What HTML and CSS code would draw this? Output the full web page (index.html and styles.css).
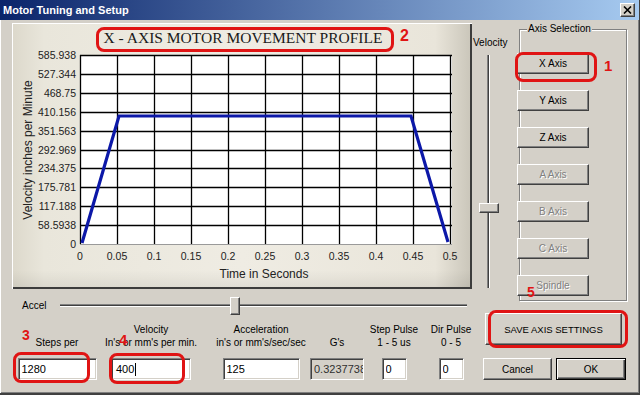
FILE: index.html
```html
<!DOCTYPE html>
<html lang="en">
<head>
    <meta charset="UTF-8">
    <title>Motor Tuning and Setup</title>
    <link rel="stylesheet" href="styles.css">
</head>
<body>

<div class="window">
    <div class="titlebar">
        <span>Motor Tuning and Setup</span>
        <button class="close">
            <svg width="9" height="8" viewBox="0 0 9 8"><path d="M1 0.5L8 7.5M8 0.5L1 7.5" stroke="#000" stroke-width="1.6"/></svg>
        </button>
    </div>

    <div class="main">
        <div class="left">
            <div class="top">
                <div class="chart-panel">
                    <svg width="458" height="264" viewBox="0 0 458 264">
                        <text class="chart-title" x="231" y="20" text-anchor="middle">X - AXIS MOTOR MOVEMENT PROFILE</text>
                        <rect x="68" y="32" width="372" height="190" fill="#fff"/>
                        <path d="M68.5 32V221M105.5 32V221M142.5 32V221M179.5 32V221M216.5 32V221M253.5 32V221M290.5 32V221M327.5 32V221M364.5 32V221M401.5 32V221M438.5 32V221" stroke="#000" stroke-width="1.3"/>
                        <path d="M68 32.5H440M68 51.5H440M68 70.5H440M68 89.5H440M68 108.5H440M68 127.5H440M68 145.5H440M68 164.5H440M68 183.5H440M68 202.5H440" stroke="#000" stroke-width="1.3"/>
                        <path d="M68 221.5H440" stroke="#9a9a9a" stroke-width="1"/>
                        <polyline points="70,220 107,93 399,93 436,219" fill="none" stroke="#0c18a8" stroke-width="3.2"/>
                        <g class="axis-num" text-anchor="end">
                            <text x="64" y="36">585.938</text>
                            <text x="64" y="55">527.344</text>
                            <text x="64" y="74">468.75</text>
                            <text x="64" y="93">410.156</text>
                            <text x="64" y="112">351.563</text>
                            <text x="64" y="131">292.969</text>
                            <text x="64" y="149">234.375</text>
                            <text x="64" y="168">175.781</text>
                            <text x="64" y="187">117.188</text>
                            <text x="64" y="206">58.5938</text>
                            <text x="64" y="225">0</text>
                        </g>
                        <g class="axis-num" text-anchor="middle">
                            <text x="68" y="237">0</text>
                            <text x="105" y="237">0.05</text>
                            <text x="142" y="237">0.1</text>
                            <text x="179" y="237">0.15</text>
                            <text x="216" y="237">0.2</text>
                            <text x="253" y="237">0.25</text>
                            <text x="290" y="237">0.3</text>
                            <text x="327" y="237">0.35</text>
                            <text x="364" y="237">0.4</text>
                            <text x="401" y="237">0.45</text>
                            <text x="438" y="237">0.5</text>
                        </g>
                        <text class="axis-title" x="252" y="255" text-anchor="middle">Time in Seconds</text>
                        <text class="axis-title" transform="translate(20,127) rotate(-90)" text-anchor="middle">Velocity inches per Minute</text>
                    </svg>
                </div>
                <div class="vslider">
                    <span class="vlabel">Velocity</span>
                    <div class="vtrack"><div class="thumb vthumb"></div></div>
                </div>
            </div>

            <div class="accel-row">
                <span class="accel-label">Accel</span>
                <div class="htrack"><div class="thumb hthumb"></div></div>
            </div>

            <div class="fields">
                <div class="field f1">
                    <div class="label">&nbsp;<br>Steps per</div>
                    <input class="box w79" type="text" value="1280">
                </div>
                <div class="field f2">
                    <div class="label">Velocity<br>In's or mm's per min.</div>
                    <div class="box w80 fake">400<span class="caret"></span></div>
                </div>
                <div class="field f3">
                    <div class="label">Acceleration<br>in's or mm's/sec/sec</div>
                    <input class="box w77" type="text" value="125">
                </div>
                <div class="field f4">
                    <div class="label">&nbsp;<br>G's</div>
                    <input class="box w54 readonly" type="text" value="0.3237738" readonly>
                </div>
                <div class="field f5">
                    <div class="label">Step Pulse<br>1 - 5 us</div>
                    <input class="box w25" type="text" value="0">
                </div>
                <div class="field f6">
                    <div class="label">Dir Pulse<br>0 - 5</div>
                    <input class="box w25" type="text" value="0">
                </div>
            </div>
        </div>

        <div class="right">
            <div class="group">
                <span class="legend">Axis Selection</span>
                <button class="btn axis-btn">X Axis</button>
                <button class="btn axis-btn">Y Axis</button>
                <button class="btn axis-btn">Z Axis</button>
                <button class="btn axis-btn disabled">A Axis</button>
                <button class="btn axis-btn disabled">B Axis</button>
                <button class="btn axis-btn disabled">C Axis</button>
                <button class="btn axis-btn disabled">Spindle</button>
            </div>
            <button class="btn save">SAVE AXIS SETTINGS</button>
            <div class="dlg-buttons">
                <button class="btn cancel">Cancel</button>
                <button class="btn ok">OK</button>
            </div>
        </div>
    </div>

    <!-- red annotations drawn over the dialog -->
    <div class="note n-title"></div>
    <div class="note n-x"></div>
    <div class="note n-3"></div>
    <div class="note n-4"></div>
    <div class="note n-5"></div>
    <span class="num num-1">1</span>
    <span class="num num-2">2</span>
    <span class="num num-3">3</span>
    <span class="num num-4">4</span>
    <span class="num num-5">5</span>
</div>

</body>
</html>
```

FILE: styles.css
```css
body {
    margin: 0;
    background-color: #d4d0c8;
    font-family: "Liberation Sans", Arial, sans-serif;
    font-size: 10px;
    color: #000;
}
.window {
    position: relative;
    width: 640px;
    height: 395px;
    box-sizing: border-box;
    background-color: #d4d0c8;
    border-right: 1px solid #404040;
    border-bottom: 2px solid #404040;
    box-shadow: inset 1px 0 #ffffff, inset -1px -1px #808080;
    overflow: hidden;
}
.titlebar {
    height: 20px;
    display: flex;
    align-items: center;
    justify-content: space-between;
    padding: 0 4px 0 3px;
    background: linear-gradient(to right, #0a246a, #a6caf0);
    color: #ffffff;
    font-weight: bold;
    font-size: 11px;
}
.close {
    width: 15px;
    height: 14px;
    padding: 0;
    display: flex;
    align-items: center;
    justify-content: center;
    background-color: #d4d0c8;
    box-sizing: border-box;
    border: 1px solid;
    border-color: #ffffff #404040 #404040 #ffffff;
    box-shadow: inset -1px -1px #808080;
}
.main {
    display: flex;
    padding: 3px 0 0 12px;
}
.left {
    width: 507px;
}
.top {
    display: flex;
    height: 266px;
}
.chart-panel {
    width: 460px;
    height: 266px;
    background:
        linear-gradient(to bottom, rgba(0, 0, 0, 0) 93%, rgba(0, 0, 0, 0.07)),
        linear-gradient(to right, #dcd8cb 0%, #e9e6db 7%, #efece3 50%, #e9e5da 92%, #c9c5b9 100%);
    box-shadow: inset 1px 1px #ffffff, inset -2px -2px #3c3c3c;
}
.chart-panel svg {
    display: block;
}
.chart-title {
    font-family: "Liberation Serif", "Times New Roman", serif;
    font-size: 15.5px;
    fill: #1a1a1a;
}
.axis-num {
    font-family: "Liberation Sans", Arial, sans-serif;
    font-size: 10.5px;
    fill: #222;
}
.axis-title {
    font-family: "Liberation Sans", Arial, sans-serif;
    font-size: 12px;
    fill: #222;
}
.vslider {
    width: 47px;
    padding-top: 14px;
    box-sizing: border-box;
}
.vlabel {
    display: block;
    line-height: 12px;
    padding-left: 1px;
}
.thumb {
    position: absolute;
    box-sizing: border-box;
    background-color: #d4d0c8;
    border: 1px solid;
    border-color: #ffffff #404040 #404040 #ffffff;
    box-shadow: inset -1px -1px #808080;
}
.vtrack {
    position: relative;
    width: 1px;
    height: 233px;
    margin: 6px 0 0 15px;
    background-color: #404040;
    border-left: 1px solid #808080;
    border-right: 1px solid #ffffff;
}
.vthumb {
    left: -9px;
    top: 148px;
    width: 20px;
    height: 10px;
}
.accel-row {
    display: flex;
    align-items: flex-start;
    height: 18px;
    margin-top: 8px;
}
.accel-label {
    width: 38px;
    margin-left: 10px;
    line-height: 18px;
}
.htrack {
    position: relative;
    width: 407px;
    height: 1px;
    margin-top: 7px;
    background-color: #404040;
    border-top: 1px solid #808080;
    border-bottom: 1px solid #ffffff;
}
.hthumb {
    left: 170px;
    top: -8px;
    width: 10px;
    height: 18px;
}
.fields {
    display: flex;
    margin-top: 8px;
}
.field {
    display: flex;
    flex-direction: column;
    align-items: center;
    line-height: 13px;
    text-align: center;
    white-space: nowrap;
}
.field .label {
    height: 26px;
}
.f1 { width: 90px; }
.f2 { width: 98px; }
.f3 { width: 122px; }
.f4 { width: 30px; }
.f5 { width: 84px; }
.f6 { width: 30px; }
.box {
    margin-top: 9px;
    height: 22px;
    box-sizing: border-box;
    padding: 0 0 0 3px;
    font-family: "Liberation Sans", Arial, sans-serif;
    font-size: 11px;
    color: #000;
    background-color: #ffffff;
    border: 1px solid;
    border-color: #808080 #ffffff #ffffff #808080;
    box-shadow: inset 1px 1px #404040, inset -1px -1px #d4d0c8;
    outline: none;
}
.box.fake {
    display: flex;
    align-items: center;
    text-align: left;
    padding-left: 4px;
}
.caret {
    width: 1px;
    height: 13px;
    margin-left: 1px;
    background-color: #000;
}
.box.readonly {
    background-color: #d4d0c8;
    color: #303030;
}
.w79 { width: 79px; }
.w80 { width: 80px; }
.w77 { width: 77px; }
.w54 { width: 54px; }
.w25 { width: 25px; }
.right {
    width: 108px;
}
.group {
    position: relative;
    margin-top: 6px;
    height: 272px;
    box-sizing: border-box;
    border: 1px solid #808080;
    box-shadow: inset 1px 1px #ffffff, 1px 1px #ffffff;
    padding: 23px 0 4px;
    display: flex;
    flex-direction: column;
    align-items: flex-start;
    gap: 16px;
}
.legend {
    position: absolute;
    top: -7px;
    left: 7px;
    padding: 0 1px;
    line-height: 12px;
    background-color: #d4d0c8;
}
.btn {
    display: block;
    box-sizing: border-box;
    padding: 0;
    font-family: "Liberation Sans", Arial, sans-serif;
    font-size: 10px;
    color: #000;
    background-color: #d4d0c8;
    border: 1px solid;
    border-color: #ffffff #404040 #404040 #ffffff;
    box-shadow: inset -1px -1px #808080;
}
.btn.disabled {
    color: #808080;
    text-shadow: 1px 1px #ffffff;
}
.axis-btn {
    width: 72px;
    height: 21px;
    margin-left: -3px;
}
.save {
    width: 137px;
    height: 32px;
    margin: 12px 0 0 -34px;
    font-size: 9.5px;
}
.dlg-buttons {
    display: flex;
    gap: 4px;
    margin: 13px 0 0 -36px;
}
.cancel {
    width: 69px;
    height: 22px;
}
.ok {
    width: 70px;
    height: 22px;
    border: 1px solid #000;
    box-shadow: inset 1px 1px #ffffff, inset -1px -1px #404040, inset -2px -2px #808080;
}
.note {
    position: absolute;
    box-sizing: border-box;
    border: 3px solid #e01414;
    border-radius: 8px;
}
.n-title { left: 96px; top: 27px; width: 298px; height: 25px; }
.n-x { left: 515px; top: 52px; width: 82px; height: 30px; }
.n-3 { left: 13px; top: 352px; width: 77px; height: 31px; }
.n-4 { left: 109px; top: 353px; width: 76px; height: 31px; }
.n-5 { left: 488px; top: 310px; width: 140px; height: 38px; }
.num {
    position: absolute;
    color: #e01414;
    font-family: "Liberation Sans", Arial, sans-serif;
    font-weight: bold;
    line-height: 1;
}
.num-1 { left: 604px; top: 58px; font-size: 15px; }
.num-2 { left: 400px; top: 28px; font-size: 16px; }
.num-3 { left: 22px; top: 328px; font-size: 14px; }
.num-4 { left: 119px; top: 332px; font-size: 15px; }
.num-5 { left: 527px; top: 285px; font-size: 14px; }
```
